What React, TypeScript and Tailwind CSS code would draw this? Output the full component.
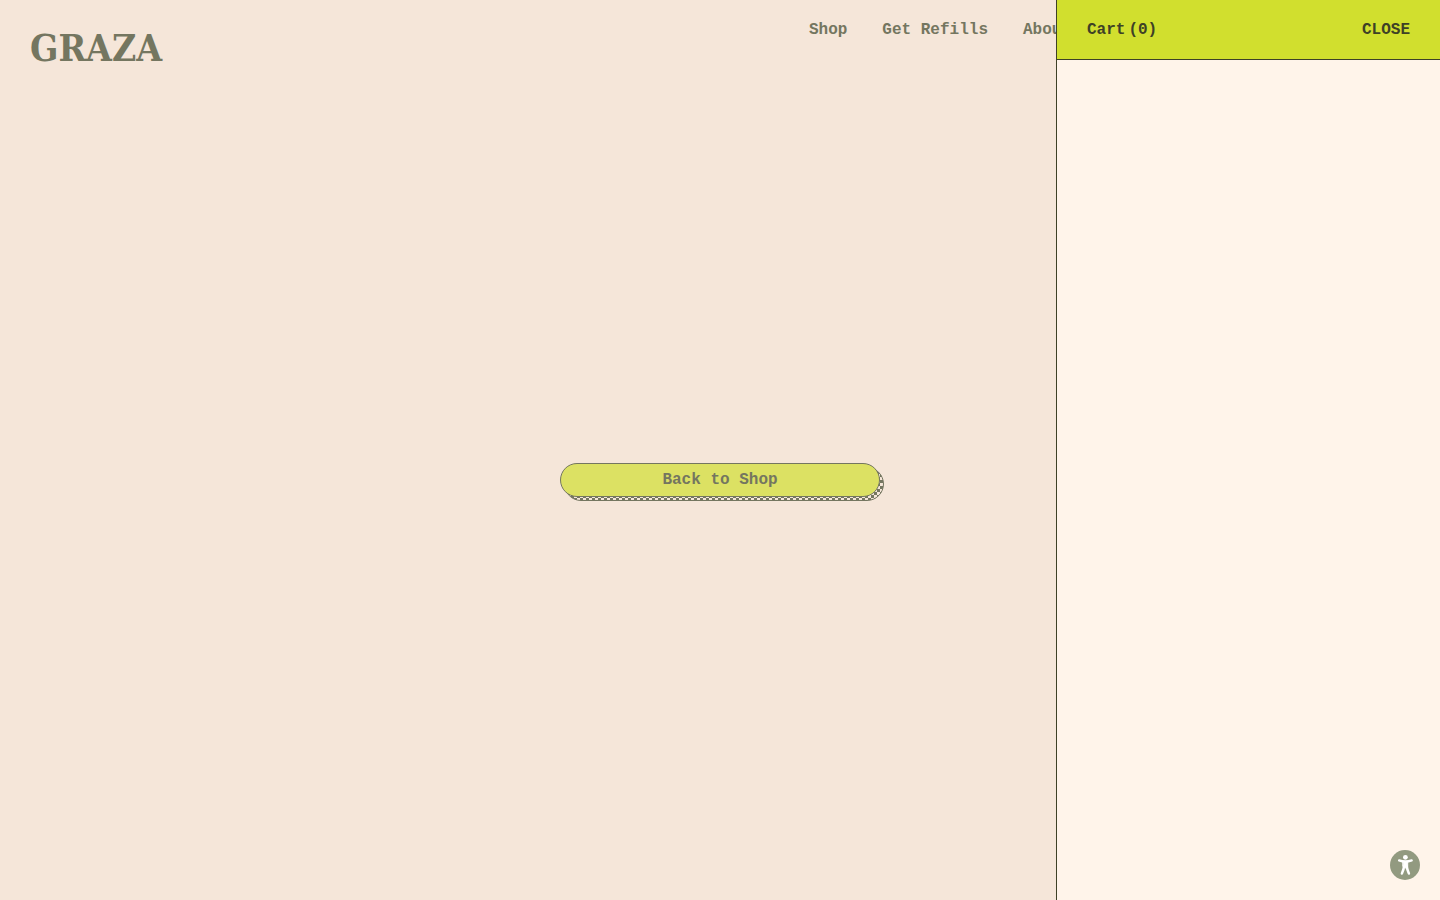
import React from 'react';

interface NavItem {
  label: string;
  href: string;
}

const NAV_ITEMS: NavItem[] = [
  { label: 'Shop', href: '#shop' },
  { label: 'Get Refills', href: '#refills' },
  { label: 'About', href: '#about' }
];

const Header: React.FC = () => (
  <header className="flex items-start justify-between pl-[30px] pr-[369px] pt-5">
    <a
      href="#home"
      className="pt-2 font-['DejaVu_Serif_Condensed','DejaVu_Serif',serif] text-[37px] leading-10 font-bold [font-stretch:condensed]"
    >
      GRAZA
    </a>
    <nav className="flex gap-[35px] font-bold">
      {NAV_ITEMS.map(item => (
        <a key={item.label} href={item.href} className="whitespace-nowrap">
          {item.label}
        </a>
      ))}
    </nav>
  </header>
);

const ShopButton: React.FC = () => (
  <div className="relative w-80">
    {/* Checkerboard drop shadow */}
    <div className="absolute inset-0 translate-x-1 translate-y-1 rounded-full border border-[#747660] bg-[#f5e6d9] bg-[repeating-conic-gradient(#747660_0_25%,#f5e6d9_0_50%)] bg-[length:6px_6px]"></div>
    <button
      type="button"
      className="relative h-[34px] w-full rounded-full border border-[#747660] bg-[#dce163]"
    >
      Back to Shop
    </button>
  </div>
);

const CartDrawer: React.FC = () => (
  <aside className="fixed inset-y-0 right-0 w-96 border-l border-[#3e4126] bg-[#fff4ea] text-[#3e4126]">
    <div className="flex h-[60px] items-center justify-between border-b border-[#3e4126] bg-[#d1df2e] px-[30px] font-bold">
      <h2 className="flex gap-[3px]">
        <span>Cart</span>
        <span>(0)</span>
      </h2>
      <button type="button">CLOSE</button>
    </div>
  </aside>
);

const AccessibilityButton: React.FC = () => (
  <button
    type="button"
    aria-label="Accessibility options"
    className="fixed right-5 bottom-5 size-[30px] rounded-full bg-[#929a80] text-white"
  >
    <svg viewBox="0 0 30 30" className="size-full" fill="none" stroke="currentColor" strokeLinecap="round" strokeLinejoin="round">
      <circle cx="15.4" cy="7.3" r="2.4" fill="currentColor" stroke="none" />
      <path d="M9.1 10.4c4.2 1.5 8.4 1.5 12.6 0" strokeWidth="2.3" />
      <path d="M13.1 11.4h4.6v5.2l-2.3 1.4-2.3-1.4z" fill="currentColor" strokeWidth="1" />
      <path d="M14 16.5c-.3 2.7-1.1 4.9-2.1 7M16.8 16.5c.3 2.7 1.1 4.9 2.1 7" strokeWidth="2.5" />
    </svg>
  </button>
);

const App: React.FC = () => (
  <div className="flex min-h-screen flex-col overflow-hidden bg-[#f5e6d9] font-['Liberation_Mono',monospace] text-base leading-5 text-[#747660]">
    <Header />
    <main className="flex flex-1 items-center justify-center pb-2 font-bold">
      <ShopButton />
    </main>
    <CartDrawer />
    <AccessibilityButton />
  </div>
);

export default App;
